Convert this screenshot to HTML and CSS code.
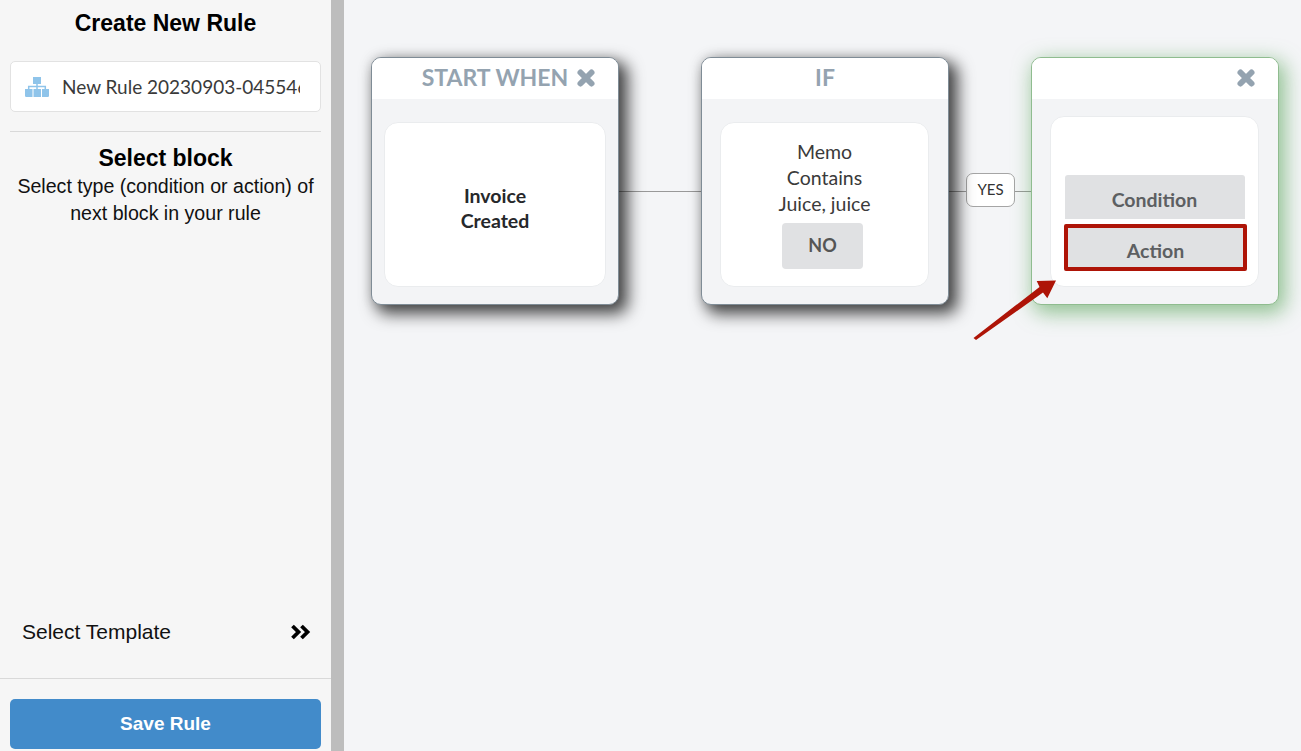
FILE: index.html
```html
<!DOCTYPE html>
<html lang="en">
<head>
  <meta charset="UTF-8">
  <title>Create New Rule</title>
  <link rel="stylesheet" href="styles.css">
</head>
<body>
  <aside class="sidebar">
    <div class="sidebar-top">
      <h1>Create New Rule</h1>
      <div class="name-field">
        <svg class="name-icon" viewBox="0 0 24 20" width="24" height="20">
          <path d="M8 0h8v7H8z M0 12h7.500v8H1.200A1.200 1.200 0 0 1 0 18.800z M8.500 12h7.500v8H8.500z M17 12h7v6.800a1.200 1.200 0 0 1-1.200 1.200H17z" fill="#8fc4ea"/>
          <path d="M12 7v5 M3.700 12V9.500h16.600V12" fill="none" stroke="#8fc4ea" stroke-width="1.500"/>
        </svg>
        <input class="name-input" type="text" value="New Rule 20230903-045546">
      </div>
      <div class="select-info">
        <h2>Select block</h2>
        <p>Select type (condition or action) of next block in your rule</p>
      </div>
    </div>
    <div class="template-row">
      <span>Select Template</span>
      <svg viewBox="0 0 22 16" width="22" height="16">
        <path d="M2.500 2l6 6-6 6 M11.500 2l6 6-6 6" fill="none" stroke="#000" stroke-width="3.800"/>
      </svg>
    </div>
    <div class="save-wrap">
      <button class="save-btn">Save Rule</button>
    </div>
  </aside>
  <div class="divider"></div>

  <main class="canvas">
    <div class="line line-a"></div>
    <div class="line line-b"></div>
    <div class="line line-c"></div>
    <div class="yes-badge">YES</div>

    <section class="node node-start">
      <header class="node-head">
        <span class="head-title">START WHEN</span>
        <svg class="close" viewBox="0 0 20 20" width="20" height="20"><path d="M4.500 4.500l11 11 M15.500 4.500l-11 11" fill="none" stroke="#94a3b0" stroke-width="6" stroke-linecap="round"/></svg>
      </header>
      <div class="node-body">
        <div class="inner inner-bold">Invoice<br>Created</div>
      </div>
    </section>

    <section class="node node-if">
      <header class="node-head"><span class="head-title">IF</span></header>
      <div class="node-body narrow">
        <div class="inner inner-if">
          <div class="if-text">Memo<br>Contains<br>Juice, juice</div>
          <div class="no-btn">NO</div>
        </div>
      </div>
    </section>

    <section class="node node-new">
      <header class="node-head">
        <svg class="close" viewBox="0 0 20 20" width="20" height="20"><path d="M4.500 4.500l11 11 M15.500 4.500l-11 11" fill="none" stroke="#94a3b0" stroke-width="6" stroke-linecap="round"/></svg>
      </header>
      <div class="node-body narrow up">
        <div class="inner inner-choice">
          <div class="choice">Condition</div>
          <div class="choice choice-marked">Action</div>
        </div>
      </div>
    </section>

    <svg class="arrow" viewBox="0 0 90 66" width="90" height="66">
      <path d="M.5 61L66.500 10L63.700 4L83 3.500L74.300 21.300L70 15.500L3 63z" fill="#ae1407"/>
    </svg>
  </main>
</body>
</html>
```

FILE: styles.css
```css
* {
  box-sizing: border-box;
}

html, body {
  height: 100%;
}

body {
  margin: 0;
  display: flex;
  height: 751px;
  overflow: hidden;
  font-family: "Liberation Sans", Arial, sans-serif;
  background: #f4f5f7;
  color: #000;
}

.sidebar {
  width: 331px;
  flex: none;
  display: flex;
  flex-direction: column;
  background: #f6f6f6;
}

.sidebar-top {
  flex: 1;
  padding: 0 10px;
}

.sidebar h1 {
  margin: 11px 0 0;
  font-size: 23px;
  line-height: 25px;
  font-weight: bold;
  text-align: center;
}

.name-field {
  display: flex;
  align-items: center;
  height: 51px;
  margin-top: 25px;
  padding: 0 20px 0 14px;
  background: #fff;
  border: 1px solid #e2e2e2;
  border-radius: 5px;
}

.name-icon {
  flex: none;
  margin-right: 13px;
}

.name-input {
  flex: 1;
  min-width: 0;
  padding: 0;
  border: none;
  outline: none;
  background: transparent;
  font-family: Lato, sans-serif;
  font-size: 19px;
  color: #3a3a3a;
}

.select-info {
  margin-top: 19px;
  padding-top: 14px;
  border-top: 1px solid #d9d9d9;
  text-align: center;
}

.select-info h2 {
  margin: 0;
  font-size: 23px;
  line-height: 25px;
  font-weight: bold;
}

.select-info p {
  margin: 2px 0 0;
  font-size: 19.600px;
  line-height: 27px;
  color: #111;
}

.template-row {
  display: flex;
  align-items: center;
  justify-content: space-between;
  height: 94px;
  padding: 0 19px 0 22px;
  font-size: 21px;
  color: #111;
  border-bottom: 1px solid #d9d9d9;
}

.save-wrap {
  padding: 20px 10px 2px;
}

.save-btn {
  display: block;
  width: 100%;
  height: 50px;
  border: none;
  border-radius: 5px;
  background: #428bca;
  color: #fff;
  font-family: "Liberation Sans", Arial, sans-serif;
  font-size: 19px;
  font-weight: bold;
}

.divider {
  width: 13px;
  flex: none;
  background: #bdbdbd;
}

.canvas {
  position: relative;
  flex: 1;
  font-family: Lato, sans-serif;
}

/* nodes sit on a free canvas, left/top are relative to it */
.node {
  position: absolute;
  top: 57px;
  width: 248px;
  height: 248px;
  display: flex;
  flex-direction: column;
  background: #f3f4f6;
  border: 1px solid #7f8c96;
  border-radius: 10px;
  box-shadow: 7px 7px 16px 2px rgba(0, 0, 0, 0.7), 0 0 12px rgba(0, 0, 0, 0.12);
  overflow: hidden;
}

.node-start { left: 27px; }
.node-if { left: 357px; }

.node-new {
  left: 687px;
  border-color: #8fbc8f;
  box-shadow: 4px 6px 20px 2px rgba(80, 160, 80, 0.6);
}

.node-head {
  position: relative;
  height: 41px;
  flex: none;
  background: #fff;
  text-align: center;
  color: #94a3b0;
  font-size: 23px;
  font-weight: bold;
  line-height: 39px;
}

.head-title {
  display: block;
}

.close {
  position: absolute;
  right: 22px;
  top: 10px;
}

.node-body {
  flex: 1;
  padding: 23px 12px 17px;
}

.node-body.narrow {
  padding-left: 18px;
  padding-right: 19px;
}

.node-body.up {
  padding-top: 17px;
}

.inner {
  height: 100%;
  background: #fff;
  border: 1px solid #eaecee;
  border-radius: 14px;
  text-align: center;
}

.inner-bold {
  padding-top: 60px;
  font-size: 19.500px;
  font-weight: bold;
  line-height: 25px;
  color: #26282b;
}

.inner-if {
  padding-top: 16px;
}

.if-text {
  font-size: 19.500px;
  line-height: 26px;
  color: #3a3a3a;
}

.no-btn {
  width: 81px;
  height: 46px;
  margin: 6px auto 0 61px;
  background: #e0e1e3;
  border-radius: 4px;
  color: #555;
  font-size: 18px;
  font-weight: bold;
  line-height: 44px;
}

.inner-choice {
  display: flex;
  flex-direction: column;
  align-items: center;
  gap: 5px;
  padding-top: 58px;
}

.choice {
  width: 180px;
  height: 44px;
  background: #e0e1e3;
  border-radius: 3px 3px 0 0;
  color: #5d5f62;
  font-size: 19.500px;
  font-weight: bold;
  line-height: 49px;
}

.choice-marked {
  width: 183px;
  height: 47px;
  margin-left: 2px;
  border: 4px solid #ae1407;
  border-radius: 2px;
  line-height: 46px;
}

.line {
  position: absolute;
  top: 191px;
  height: 1px;
  background: #999;
}

.line-a { left: 275px; width: 83px; }
.line-b { left: 605px; width: 17px; }
.line-c { left: 671px; width: 17px; }

.yes-badge {
  position: absolute;
  left: 622px;
  top: 173px;
  width: 49px;
  height: 34px;
  background: #fff;
  border: 1px solid #a5a5a5;
  border-radius: 7px;
  text-align: center;
  font-size: 15px;
  line-height: 30px;
  color: #333;
}

.arrow {
  position: absolute;
  left: 629px;
  top: 277px;
}
```
